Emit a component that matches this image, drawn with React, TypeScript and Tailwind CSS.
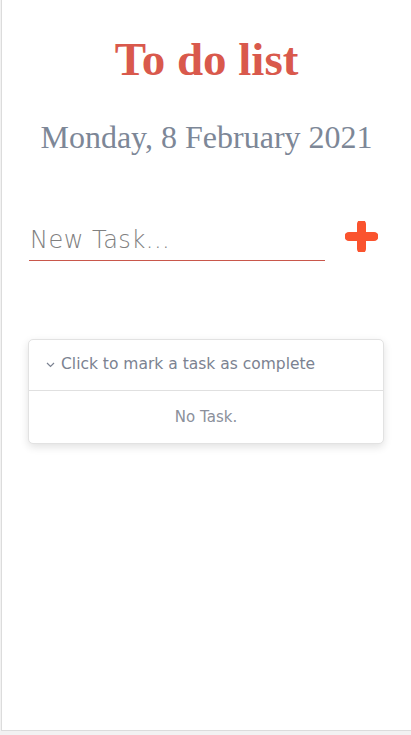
import { useState } from "react";

const PlusIcon = () => (
  <svg width="33" height="31" viewBox="0 0 33 31" fill="none">
    <path
      d="M16.5 3v25M4 15.5h25"
      stroke="#fa532e"
      strokeWidth="9"
      strokeLinecap="round"
    />
  </svg>
);

const Chevron = () => (
  <svg width="9" height="6" viewBox="0 0 9 6" fill="none">
    <path d="M1 1l3.5 3.5L8 1" stroke="#7b8291" strokeWidth="1.2" />
  </svg>
);

export default function App() {
  const [task, setTask] = useState("");

  return (
    <div className="min-h-screen bg-[#f2f2f2]">
      <div className="ml-px h-[731px] border-l border-b border-[#dcdcdc] bg-white">
        <h1
          className="pt-[29px] text-center text-[47px] font-bold leading-[60px] text-[#d9594c]"
          style={{ fontFamily: '"Liberation Serif", serif' }}
        >
          To do list
        </h1>
        <p
          className="mt-[28px] text-center text-[32px] leading-[40px] text-[#7d8797]"
          style={{ fontFamily: '"Liberation Serif", serif' }}
        >
          Monday, 8 February 2021
        </p>

        <div className="mt-[62px] flex items-center pl-[27px] pr-[33px]">
          <input
            value={task}
            onChange={(e) => setTask(e.target.value)}
            placeholder="New Task..."
            className="h-[42px] w-[296px] border-b border-[#c9574b] bg-transparent px-px text-[24px] font-light tracking-[0.5px] text-[#555] outline-none placeholder:text-[#808080]"
            style={{ fontFamily: '"DejaVu Sans", sans-serif' }}
          />
          <button className="ml-auto -mt-[8px]">
            <PlusIcon />
          </button>
        </div>

        <div
          className="ml-[26px] mr-[27px] mt-[78px] rounded-[5px] border border-[#e2e2e2] bg-white shadow-[0_3px_8px_rgba(0,0,0,0.12)]"
          style={{ fontFamily: '"DejaVu Sans", sans-serif' }}
        >
          <div className="flex h-[51px] items-center gap-[6px] border-b border-[#e0e0e0] pl-[17px] text-[15.5px] text-[#7b8291]">
            <Chevron />
            <span>Click to mark a task as complete</span>
          </div>
          <div className="flex h-[52px] items-center justify-center text-[15px] text-[#8b909b]">
            No Task.
          </div>
        </div>
      </div>
    </div>
  );
}
